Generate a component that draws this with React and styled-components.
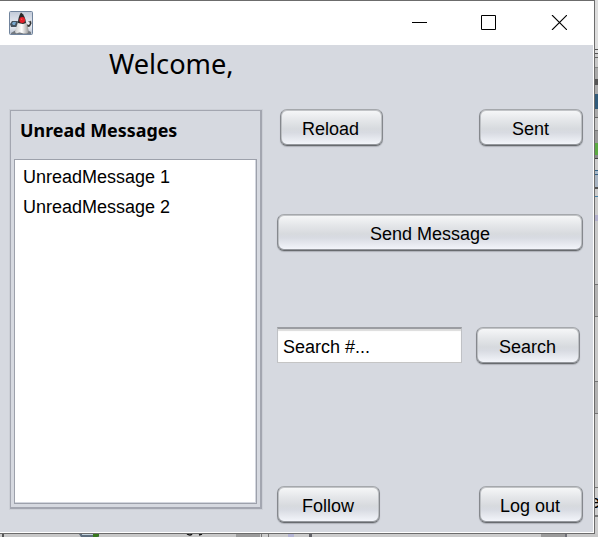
import React from 'react';
import styled, { createGlobalStyle } from 'styled-components';

const GlobalStyle = createGlobalStyle`
  body { margin: 0; overflow: hidden; background: #ccc; }
  * { box-sizing: border-box; }
`;

const Desktop = styled.div`
  display: grid;
  grid-template-columns: 595px 3px;
  grid-template-rows: 534px 3px;
  width: 598px;
  height: 537px;
  overflow: hidden;
  font: 18px/20px "Liberation Sans", Arial, sans-serif;
  color: #000;
`;

const Window = styled.div`
  display: flex;
  flex-direction: column;
  background: #d6d9e0;
  border: solid #6c6c6c;
  border-width: 1px 1px 1px 0;
`;

const TitleBar = styled.header`
  display: flex;
  align-items: center;
  height: 44px;
  padding: 0 26px 0 9px;
  background: #fff;
`;

const Controls = styled.div`
  display: flex;
  gap: 54px;
  margin: -2px 1px 0 auto;
`;

const Content = styled.main`
  flex: 1;
  display: grid;
  grid-template-columns: 252px 306px;
  grid-template-rows: 64px 1fr;
  column-gap: 15px;
  padding-left: 10px;
  border: solid #fff;
  border-width: 0 1px 1px 0;
`;

const Welcome = styled.h1`
  grid-column: 1 / -1;
  margin: 2px 0 0 99px;
  font: 27.2px/34px "Noto Sans", sans-serif;
`;

const MessagePanel = styled.section`
  display: flex;
  flex-direction: column;
  height: 399px;
  margin-top: 1px;
  padding: 0 3px 3px;
  border: solid #a3a6b0;
  border-width: 1px 2px 2px 1px;
  box-shadow: 0 0 0 1px #cccfd6;
`;

const PanelHeading = styled.h2`
  height: 48px;
  margin: 0;
  padding: 8px 0 0 6px;
  font: bold 17.9px/22px "Noto Sans", sans-serif;
  white-space: nowrap;
`;

const MessageList = styled.ul`
  flex: 1;
  margin: 0;
  padding: 2px 0 0 8px;
  list-style: none;
  background: #fff;
  border: 1px solid #9da1ab;
  box-shadow: inset -1px -1px #d3d6de;
`;

const Message = styled.li`
  height: 30px;
  line-height: 31px;
`;

const Actions = styled.section`
  display: flex;
  flex-direction: column;
`;

const Row = styled.div`
  display: flex;
  justify-content: space-between;
  height: 38px;
  margin-top: ${(p) => p.$gap || 0}px;
  padding: 0 ${(p) => p.$right || 0}px 0 ${(p) => p.$left || 0}px;
`;

const Button = styled.button`
  width: ${(p) => p.$width || 103}px;
  height: 37px;
  padding: 2px ${(p) => p.$nudge || 0}px 0 0;
  border: 1px solid;
  border-color: #a5a8ac #85888d #686b6f #85888d;
  border-radius: 7px;
  background: linear-gradient(#f7f8f9 0%, #e4e6e9 30%, #d7dade 54%, #d8dbe2 65%, #f5f7fc 100%);
  box-shadow:
    inset 0 1px #c2c4c7,
    inset 0 -1px #94979c,
    inset 1px 0 #bcbfc3,
    inset -1px 0 #bcbfc3,
    0 1px 1px #aeb1b8;
  color: inherit;
  font: inherit;
`;

const SearchField = styled.input`
  width: 185px;
  height: 36px;
  padding: 3px 5px 0;
  border: solid;
  border-width: 2px 1px 1px;
  border-color: #9b9da2 #bfc1c5 #c5c5c5;
  border-radius: 0;
  outline: none;
  background: #fff;
  box-shadow: inset 0 2px 1px #dcdcdc;
  color: #000;
  font: inherit;
`;

const RightEdge = styled.div`
  background: linear-gradient(
    #ddd 0 49px, #555 49px 50px, #ddd 50px 53px, #555 53px 54px,
    #ccc 54px 57px, #666 57px 58px, #c8c8c8 58px 67px, #888 67px 68px,
    #aaa 68px 79px, #555 79px 85px, #aaa 85px 94px, #315b7b 94px 109px,
    #aaa 109px 117px, #666 117px 118px, #c5c5c5 118px 130px, #777 130px 131px,
    #999 131px 143px, #5caa43 143px 155px, #888 155px 158px, #444 158px 159px,
    #ccc 159px 170px, #376488 170px 171px, #a9b9c9 171px 174px, #376488 174px 175px,
    #a9b5c3 175px 187px, #555 187px 189px, #ccc 189px 196px, #4682a8 196px 197px,
    #ccc 197px 215px, #b2b0cc 215px 221px, #c9c9c9 221px 284px, #777 284px 285px,
    #b3b3b3 285px 316px, #777 316px 317px, #c9c9c9 317px 381px, #777 381px 382px,
    #b3b3b3 382px 413px, #777 413px 414px, #c9c9c9 414px 487px, #777 487px 488px,
    #ccc 488px 515px, #777 515px 517px, #ccc 517px
  );
  padding-top: 492px;
  overflow: hidden;
  line-height: 20px;
  text-indent: -5px;
`;

const BottomEdge = styled.div`
  grid-column: 1 / -1;
  background: linear-gradient(
    90deg, #ccc 0 2px, #555 2px 4px, #c8c8c8 4px 236px, #9b9b9b 236px 260px,
    #ccc 260px 261px, #777 261px 262px, #ccc 262px 268px, #777 268px 269px,
    #ccc 269px 288px, #b4b4d4 288px 294px, #ccc 294px 309px, #626268 309px 312px,
    #ccc 312px 541px, #9b9b9b 541px 565px, #707078 565px 567px, #c8c8c8 567px
  );
`;

const Svg = styled.svg`
  display: block;
`;

const Duke = () => (
  <Svg width="24" height="24" viewBox="0 0 24 24">
    <defs>
      <linearGradient id="tile" x2="0" y2="1">
        <stop stopColor="#c2cad8" />
        <stop offset=".6" stopColor="#edf0f6" />
        <stop offset="1" stopColor="#b7c0cf" />
      </linearGradient>
      <linearGradient id="belly">
        <stop stopColor="#ccc" />
        <stop offset=".5" stopColor="#fff" />
        <stop offset="1" stopColor="#999" />
      </linearGradient>
    </defs>
    <rect x=".5" y=".5" width="23" height="23" rx="1" fill="url(#tile)" stroke="#71849d" />
    <path d="M1 13l2-3h5l3 1-2 5H2z" fill="#46525d" />
    <path d="M3 12.500l1-1.500h3l-1 3H4z" fill="#7aa9cf" />
    <path d="M17 13l3 1 1-2-2-2 2 .5 1-1 .5 3-1.500 3-4 1z" fill="#343434" />
    <path d="M2 22l5-3h11l4 2v2H2z" fill="#737980" />
    <path d="M9 11c-1 4-3 7-3 10 1 2 3 1 4 .5 2-.5 3 1 6 1 4 0 4-2 3-6l-2-6z" fill="url(#belly)" />
    <path d="M12 1.500c3 2 4.500 5.500 5 10.500l-3 1-5-1c0-4 1-7.500 3-10.500z" fill="#292929" />
    <circle cx="13.200" cy="9" r="2.900" fill="#e3202a" />
    <circle cx="12.700" cy="8.300" r=".7" fill="#f55" />
  </Svg>
);

const BottomDetails = () => (
  <Svg width="598" height="3" viewBox="0 0 598 3">
    <path d="M79 0h20v3H81z" fill="#607080" />
    <path d="M82 0h11v1H82z" fill="#c5d5df" />
    <path d="M93 0h6v2l-2 1h-4z" fill="#38791e" />
    <path d="M187 0q3 2 5 0M199 1l3-1" fill="none" stroke="#111" strokeWidth="1.500" />
  </Svg>
);

export default function App() {
  return (
    <Desktop>
      <GlobalStyle />
      <Window>
        <TitleBar>
          <Duke />
          <Controls>
            <Svg width="15" height="15" viewBox="0 0 15 15"><path d="M0 7.500h15" stroke="#000" /></Svg>
            <Svg width="15" height="15" viewBox="0 0 15 15"><path d="M.5.5h14v14H.5z" fill="none" stroke="#000" /></Svg>
            <Svg width="17" height="15" viewBox="0 0 17 15"><path d="M2 0l15 15M17 0L2 15" stroke="#000" strokeWidth="1.100" /></Svg>
          </Controls>
        </TitleBar>
        <Content>
          <Welcome>Welcome,</Welcome>
          <MessagePanel>
            <PanelHeading>Unread Messages</PanelHeading>
            <MessageList>
              <Message>UnreadMessage 1</Message>
              <Message>UnreadMessage 2</Message>
            </MessageList>
          </MessagePanel>
          <Actions>
            <Row $left={3}>
              <Button $nudge={2}>Reload</Button>
              <Button $width={104} $nudge={1}>Sent</Button>
            </Row>
            <Row $gap={67}>
              <Button $width={306}>Send Message</Button>
            </Row>
            <Row $gap={75} $right={3}>
              <SearchField defaultValue="Search #..." aria-label="Search" />
              <Button $width={104} $nudge={1}>Search</Button>
            </Row>
            <Row $gap={121}>
              <Button $nudge={1}>Follow</Button>
              <Button $width={104} $nudge={2}>Log out</Button>
            </Row>
          </Actions>
        </Content>
      </Window>
      <RightEdge>e</RightEdge>
      <BottomEdge><BottomDetails /></BottomEdge>
    </Desktop>
  );
}
